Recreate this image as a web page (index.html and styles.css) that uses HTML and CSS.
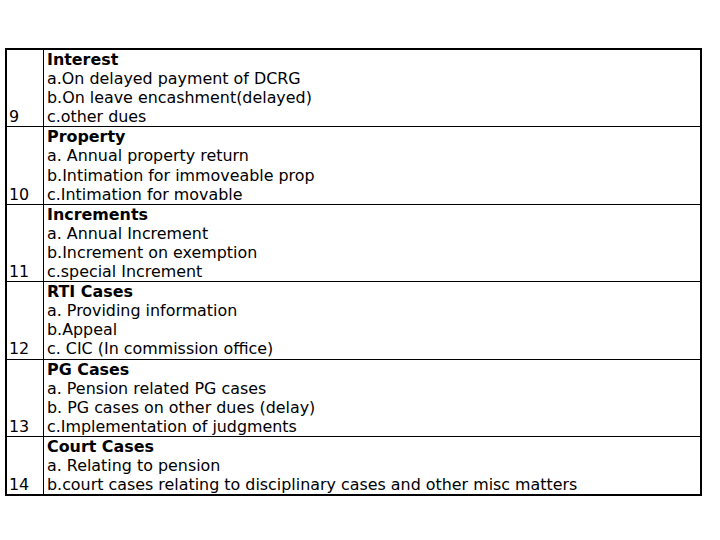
FILE: index.html
```html
<!DOCTYPE html>
<html>
<head>
<meta charset="utf-8">
<link rel="stylesheet" href="styles.css">
</head>
<body>
<div class="page">
<table class="grid">
  <tr>
    <td class="num">9</td>
    <td class="desc"><div class="head">Interest</div><div>a.On delayed payment of DCRG</div><div>b.On leave encashment(delayed)</div><div>c.other dues</div></td>
  </tr>
  <tr>
    <td class="num">10</td>
    <td class="desc"><div class="head">Property</div><div>a. Annual property return</div><div>b.Intimation for immoveable prop</div><div>c.Intimation for movable</div></td>
  </tr>
  <tr>
    <td class="num">11</td>
    <td class="desc"><div class="head">Increments</div><div>a. Annual Increment</div><div>b.Increment on exemption</div><div>c.special Increment</div></td>
  </tr>
  <tr>
    <td class="num">12</td>
    <td class="desc"><div class="head">RTI Cases</div><div>a. Providing information</div><div>b.Appeal</div><div>c. CIC (In commission office)</div></td>
  </tr>
  <tr>
    <td class="num">13</td>
    <td class="desc"><div class="head">PG Cases</div><div>a. Pension related PG cases</div><div>b. PG cases on other dues (delay)</div><div>c.Implementation of judgments</div></td>
  </tr>
  <tr>
    <td class="num">14</td>
    <td class="desc"><div class="head">Court Cases</div><div>a. Relating to pension</div><div>b.court cases relating to disciplinary cases and other misc matters</div></td>
  </tr>
</table>
</div>
</body>
</html>
```
FILE: styles.css
```css
html, body {
  margin: 0;
  padding: 0;
  background: #ffffff;
}
.page {
  padding: 48px 0 0 5px;
  font-family: "DejaVu Sans", Verdana, sans-serif;
  font-size: 15.9px;
  color: #000000;
}
.grid {
  border-collapse: collapse;
  width: 697px;
  border: 2px solid #000000;
}
.grid td {
  border: 1px solid #000000;
  padding: 0;
  line-height: 19.1px;
}
.num {
  width: 34px;
  padding-left: 2px !important;
  vertical-align: bottom;
}
.desc {
  padding-left: 3px !important;
  vertical-align: top;
}
.head {
  font-weight: bold;
}
```
